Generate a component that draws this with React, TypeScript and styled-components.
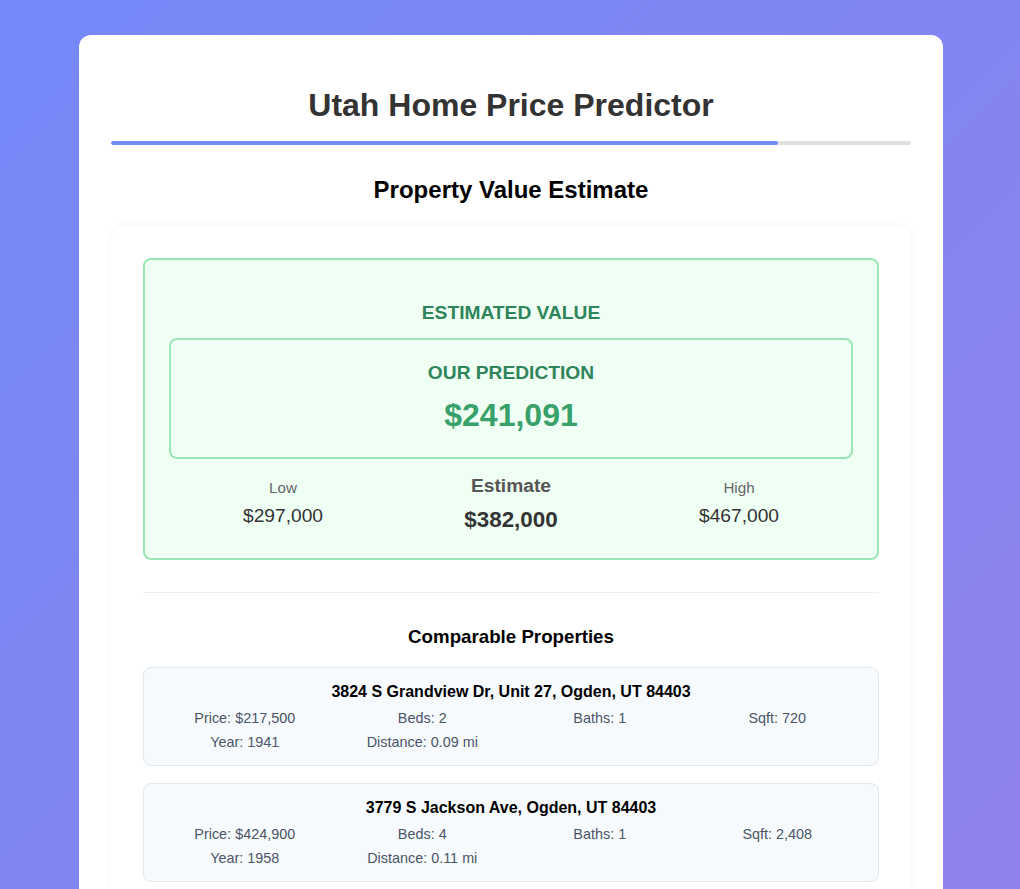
import styled, { createGlobalStyle } from 'styled-components';

const GlobalStyle = createGlobalStyle`
  html, body {
    margin: 0;
    padding: 0;
  }
  body {
    min-height: 100vh;
    background: linear-gradient(135deg, #7489f8 0%, #8f82ec 100%);
    background-attachment: fixed;
    font-family: "Liberation Sans", Arial, sans-serif;
  }
  * { box-sizing: border-box; }
`;

const Page = styled.div`
  padding: 35px 19px 40px 21px;
`;

const Container = styled.main`
  width: 864px;
  margin: 0 auto;
  padding: 32px 32px 40px;
  background: #fff;
  border-radius: 12px;
`;

const Title = styled.h1`
  margin: 18px 0 16px;
  text-align: center;
  font-size: 32px;
  font-weight: 700;
  color: #333;
  line-height: 40px;
`;

const Progress = styled.div`
  height: 4px;
  background: #e0e0e0;
  border-radius: 2px;
  overflow: hidden;
`;

const ProgressFill = styled.div`
  height: 100%;
  background: #6f8bf6;
  border-radius: 2px;
`;

const StepTitle = styled.h2`
  margin: 30px 0 21px;
  text-align: center;
  font-size: 24px;
  font-weight: 700;
  color: #000;
  line-height: 30px;
`;

const ResultCard = styled.section`
  background: #fff;
  border-radius: 12px;
  padding: 32px;
  box-shadow: 0 0 6px rgba(0, 0, 0, 0.06);
`;

const EstimateBox = styled.div`
  background: #f0fff4;
  border: 2px solid #9ae6b4;
  border-radius: 8px;
  padding: 41px 24px 25px;
  text-align: center;
`;

const GreenLabel = styled.div`
  font-size: 19.2px;
  font-weight: 700;
  color: #2f855a;
  text-transform: uppercase;
  line-height: 23px;
`;

const PredictionBox = styled.div`
  margin-top: 14px;
  border: 2px solid #9ae6b4;
  border-radius: 8px;
  padding: 21px 16px 23px;
`;

const PredictionValue = styled.div`
  margin-top: 12px;
  font-size: 32px;
  font-weight: 700;
  color: #38a169;
  line-height: 38px;
`;

const RangeRow = styled.div`
  display: grid;
  grid-template-columns: 1fr 1fr 1fr;
  margin-top: 15px;
  align-items: start;
`;

const RangeItem = styled.div<{ $main?: boolean }>`
  display: flex;
  flex-direction: column;
  align-items: center;
  padding-top: ${({ $main }) => ($main ? '0' : '4px')};
`;

const RangeLabel = styled.span<{ $main?: boolean }>`
  font-size: ${({ $main }) => ($main ? '19.2px' : '15.2px')};
  font-weight: ${({ $main }) => ($main ? 700 : 400)};
  color: ${({ $main }) => ($main ? '#555' : '#666')};
  line-height: ${({ $main }) => ($main ? '23px' : '19px')};
`;

const RangeValue = styled.span<{ $main?: boolean }>`
  margin-top: ${({ $main }) => ($main ? '9px' : '7px')};
  font-size: ${({ $main }) => ($main ? '22.4px' : '19.2px')};
  font-weight: ${({ $main }) => ($main ? 700 : 400)};
  color: #333;
  line-height: ${({ $main }) => ($main ? '27px' : '23px')};
`;

const Divider = styled.hr`
  margin: 32px 0 33px;
  border: none;
  border-top: 1px solid #eee;
`;

const CompsTitle = styled.h3`
  margin: 0 0 19px;
  text-align: center;
  font-size: 18.72px;
  font-weight: 700;
  color: #000;
  line-height: 22px;
`;

const CompList = styled.div`
  display: flex;
  flex-direction: column;
  gap: 17px;
`;

const CompCard = styled.div`
  background: #f7fafc;
  border: 1px solid #e2e8f0;
  border-radius: 8px;
  padding: 14px 16px 14px;
`;

const CompAddress = styled.div`
  text-align: center;
  font-size: 16px;
  font-weight: 700;
  color: #000;
  line-height: 20px;
  margin-bottom: 7px;
`;

const CompGrid = styled.div`
  display: grid;
  grid-template-columns: repeat(4, 1fr);
  column-gap: 8px;
  row-gap: 6px;
`;

const CompStat = styled.span`
  text-align: center;
  font-size: 14.4px;
  color: #4a5568;
  line-height: 18px;
`;

const comps = [
  {
    address: '3824 S Grandview Dr, Unit 27, Ogden, UT 84403',
    price: '$217,500',
    beds: 2,
    baths: 1,
    sqft: '720',
    year: 1941,
    distance: '0.09 mi',
  },
  {
    address: '3779 S Jackson Ave, Ogden, UT 84403',
    price: '$424,900',
    beds: 4,
    baths: 1,
    sqft: '2,408',
    year: 1958,
    distance: '0.11 mi',
  },
];

export default function App() {
  const step = 5;
  const totalSteps = 6;

  return (
    <Page>
      <GlobalStyle />
      <Container>
        <Title>Utah Home Price Predictor</Title>
        <Progress>
          <ProgressFill style={{ width: `${(step / totalSteps) * 100}%` }} />
        </Progress>

        <StepTitle>Property Value Estimate</StepTitle>

        <ResultCard>
          <EstimateBox>
            <GreenLabel>Estimated Value</GreenLabel>
            <PredictionBox>
              <GreenLabel>Our Prediction</GreenLabel>
              <PredictionValue>$241,091</PredictionValue>
            </PredictionBox>
            <RangeRow>
              <RangeItem>
                <RangeLabel>Low</RangeLabel>
                <RangeValue>$297,000</RangeValue>
              </RangeItem>
              <RangeItem $main>
                <RangeLabel $main>Estimate</RangeLabel>
                <RangeValue $main>$382,000</RangeValue>
              </RangeItem>
              <RangeItem>
                <RangeLabel>High</RangeLabel>
                <RangeValue>$467,000</RangeValue>
              </RangeItem>
            </RangeRow>
          </EstimateBox>

          <Divider />

          <CompsTitle>Comparable Properties</CompsTitle>
          <CompList>
            {comps.map((c) => (
              <CompCard key={c.address}>
                <CompAddress>{c.address}</CompAddress>
                <CompGrid>
                  <CompStat>Price: {c.price}</CompStat>
                  <CompStat>Beds: {c.beds}</CompStat>
                  <CompStat>Baths: {c.baths}</CompStat>
                  <CompStat>Sqft: {c.sqft}</CompStat>
                  <CompStat>Year: {c.year}</CompStat>
                  <CompStat>Distance: {c.distance}</CompStat>
                </CompGrid>
              </CompCard>
            ))}
          </CompList>
        </ResultCard>
      </Container>
    </Page>
  );
}
